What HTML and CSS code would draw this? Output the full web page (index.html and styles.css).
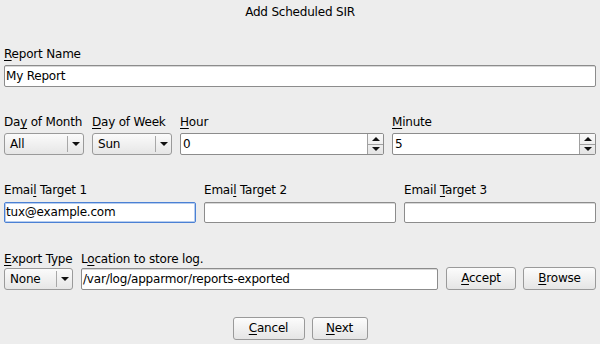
FILE: index.html
```html
<!DOCTYPE html>
<html>
<head>
<meta charset="utf-8">
<link rel="stylesheet" href="styles.css">
</head>
<body>
<div class="dialog">
  <div class="title">Add Scheduled SIR</div>

  <div class="section s-report">
    <div class="field grow">
      <label class="lbl"><u>R</u>eport Name</label>
      <div class="entry">My Report</div>
    </div>
  </div>

  <div class="section s-time">
    <div class="field">
      <label class="lbl">Da<u>y</u> of Month</label>
      <div class="combo w80"><span class="ctext">All</span><span class="cbtn"><span class="down"></span></span></div>
    </div>
    <div class="field">
      <label class="lbl"><u>D</u>ay of Week</label>
      <div class="combo w80"><span class="ctext">Sun</span><span class="cbtn"><span class="down"></span></span></div>
    </div>
    <div class="field grow">
      <label class="lbl"><u>H</u>our</label>
      <div class="spin"><span class="stext">0</span><span class="sbtns"><span class="sb"><span class="up"></span></span><span class="sb"><span class="down"></span></span></span></div>
    </div>
    <div class="field grow">
      <label class="lbl"><u>M</u>inute</label>
      <div class="spin"><span class="stext">5</span><span class="sbtns"><span class="sb"><span class="up"></span></span><span class="sb"><span class="down"></span></span></span></div>
    </div>
  </div>

  <div class="section s-email">
    <div class="field grow">
      <label class="lbl">Emai<u>l</u> Target 1</label>
      <div class="entry focus">tux@example.com</div>
    </div>
    <div class="field grow">
      <label class="lbl">Emai<u>l</u> Target 2</label>
      <div class="entry"></div>
    </div>
    <div class="field grow">
      <label class="lbl">Email <u>T</u>arget 3</label>
      <div class="entry"></div>
    </div>
  </div>

  <div class="section s-export">
    <div class="field">
      <label class="lbl"><u>E</u>xport Type</label>
      <div class="combo w69"><span class="ctext">None</span><span class="cbtn"><span class="down"></span></span></div>
    </div>
    <div class="field grow">
      <label class="lbl">L<u>o</u>cation to store log.</label>
      <div class="entry">/var/log/apparmor/reports-exported</div>
    </div>
    <button class="btn accept"><u>A</u>ccept</button>
    <button class="btn browse"><u>B</u>rowse</button>
  </div>

  <div class="actions">
    <button class="btn cancel"><u>C</u>ancel</button>
    <button class="btn next"><u>N</u>ext</button>
  </div>
</div>
</body>
</html>
```
FILE: styles.css
```css
* { box-sizing: border-box; }
html, body { margin: 0; padding: 0; }
body {
  width: 600px;
  height: 344px;
  background: #ededed;
  font-family: "DejaVu Sans", sans-serif;
  font-size: 12px;
  letter-spacing: -0.2px;
  color: #000;
  overflow: hidden;
}
.dialog {
  display: flex;
  flex-direction: column;
  padding: 0 4px;
}
.title {
  margin-top: 5px;
  height: 14px;
  line-height: 14px;
  text-align: center;
}
.section {
  display: flex;
  align-items: flex-end;
}
.s-report { margin-top: 28px; }
.s-time { margin-top: 28px; gap: 8px; }
.s-email { margin-top: 28px; gap: 8px; }
.s-export { margin-top: 29px; gap: 8px; }

.field { display: flex; flex-direction: column; }
.grow { flex: 1; min-width: 0; }
.lbl {
  height: 14px;
  line-height: 14px;
  margin-bottom: 4px;
  white-space: nowrap;
}
.s-email .lbl { margin-bottom: 5px; }
.s-export .lbl { margin-bottom: 2px; }
u { text-decoration: underline; text-underline-offset: 2px; }

.entry {
  height: 22px;
  line-height: 20px;
  padding: 0 1px;
  background: #fff;
  border: 1px solid #8c8c8c;
  border-radius: 2px;
  box-shadow: inset 0 1px 0 #d8d8d8;
  white-space: nowrap;
  overflow: hidden;
}
.s-email .entry { height: 21px; line-height: 19px; }
.entry.focus {
  border-color: #4a80d4;
  box-shadow: inset 0 0 0 1px #b7cdee;
}

.combo {
  height: 22px;
  display: flex;
  border: 1px solid #9a9a9a;
  border-radius: 3px;
  background: linear-gradient(#fbfbfb, #e6e6e6);
}
.w80 { width: 80px; }
.w69 { width: 69px; }
.ctext {
  flex: 1;
  line-height: 20px;
  padding-left: 5px;
}
.cbtn {
  width: 16px;
  border-left: 1px solid #a8a8a8;
  display: flex;
  align-items: center;
  justify-content: center;
  margin: 2px 0;
}
.down, .up {
  width: 0; height: 0;
  border-left: 4px solid transparent;
  border-right: 4px solid transparent;
}
.down { border-top: 4px solid #111; }
.up { border-bottom: 4px solid #111; }

.spin {
  height: 22px;
  display: flex;
  background: #fff;
  border: 1px solid #8c8c8c;
  border-radius: 2px;
}
.stext {
  flex: 1;
  line-height: 20px;
  padding-left: 2px;
}
.sbtns {
  width: 16px;
  display: flex;
  flex-direction: column;
  border-left: 1px solid #a0a0a0;
  background: linear-gradient(#fafafa, #e4e4e4);
  border-radius: 0 1px 1px 0;
}
.sb {
  flex: 1;
  display: flex;
  align-items: center;
  justify-content: center;
}
.sb + .sb { border-top: 1px solid #a0a0a0; }

.btn {
  font-family: "DejaVu Sans", sans-serif;
  font-size: 12px;
  letter-spacing: -0.2px;
  color: #000;
  height: 23px;
  padding: 0;
  border: 1px solid #9a9a9a;
  border-radius: 3px;
  background: linear-gradient(#fcfcfc, #e5e5e5);
  text-align: center;
  line-height: 21px;
}
.accept { width: 70px; }
.browse { width: 73px; margin-left: -1px; }

.actions {
  margin-top: 27px;
  display: flex;
  justify-content: center;
  gap: 7px;
}
.cancel { width: 72px; }
.next { width: 56px; }
```
